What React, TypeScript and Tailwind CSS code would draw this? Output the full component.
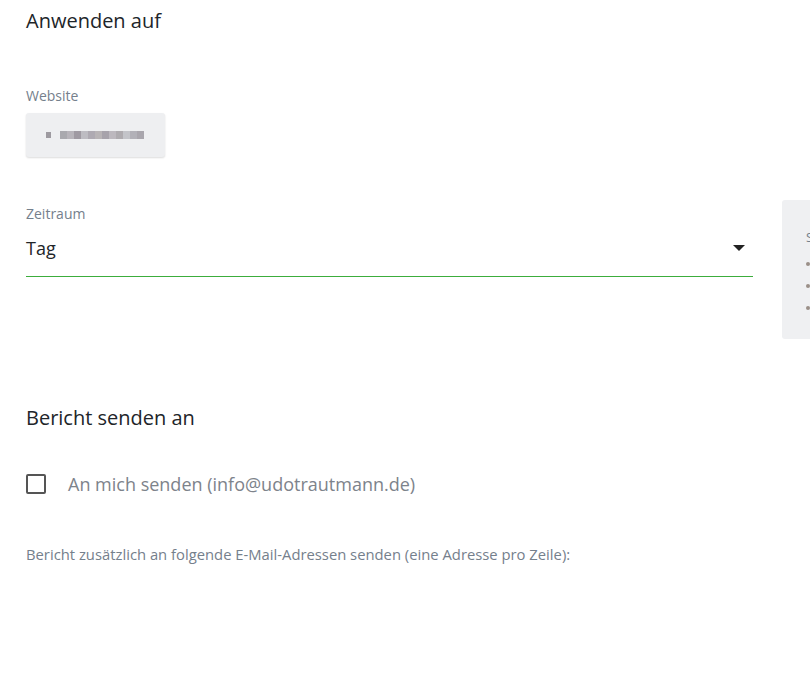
export default function App() {
  const blur = ["#a9a9ae", "#b7b4ba", "#9f9aa2", "#bdbcc2", "#aeaab2", "#b8b4b6", "#a7a3ab", "#bcb8be", "#aeabaf", "#c3c4c9", "#b2b1b8", "#a9a6ad"];
  return (
    <div className="relative h-[679px] w-[810px] overflow-hidden bg-white" style={{ fontFamily: '"Open Sans", "Noto Sans", sans-serif' }}>
      <div className="flex">
        <div className="ml-[26px] flex w-[727px] shrink-0 flex-col">
          <h2 className="mt-[7px] text-[20px] leading-[28px] text-[#212529]">Anwenden auf</h2>

          <div className="mt-[51px] text-[14px] leading-[20px] text-[#75808c]">Website</div>
          <div className="mt-[7px] flex h-[44px] w-[139px] items-center rounded-[3px] bg-[#eeeff1] pl-[20px] shadow-[0_1px_2px_rgba(0,0,0,0.14)]">
            <div className="flex h-[8px] items-center blur-[0.6px]">
              <span className="mr-[9px] h-[6px] w-[5px] bg-[#9d9aa0]" />
              {blur.map((c, i) => (
                <span key={i} className="h-[8px] w-[7px]" style={{ backgroundColor: c }} />
              ))}
            </div>
          </div>

          <div className="mt-[47px] text-[14px] leading-[20px] text-[#75808c]">Zeitraum</div>
          <div className="mt-[8px] flex h-[45px] items-start justify-between border-b border-[#3cad3c] pt-[3px]">
            <span className="text-[18px] leading-[26px] text-[#212529]">Tag</span>
            <svg width="12" height="7" viewBox="0 0 12 7" className="mr-[8px] mt-[10px]">
              <path d="M0 0h12L6 6z" fill="#222" />
            </svg>
          </div>

          <h2 className="mt-[127px] text-[20px] leading-[28px] text-[#212529]">Bericht senden an</h2>

          <div className="mt-[39px] flex items-center">
            <span className="h-[20px] w-[20px] rounded-[2px] border-2 border-[#555]" />
            <span className="ml-[22px] text-[18px] leading-[26px] text-[#7d838b]">An mich senden (info@udotrautmann.de)</span>
          </div>

          <p className="mt-[47px] text-[14.8px] leading-[20px] text-[#75808c]">
            Bericht zusätzlich an folgende E-Mail-Adressen senden (eine Adresse pro Zeile):
          </p>
        </div>

        <div className="ml-[29px] mt-[200px] flex h-[139px] w-[40px] shrink-0 flex-col gap-[18px] rounded-[3px] bg-[#eff0f2] pl-[24px] pt-[30px] text-[13px] text-[#75808c]">
          <span className="leading-[14px]">S</span>
          <span className="h-[4px] w-[4px] rounded-full bg-[#9a8f88]" />
          <span className="h-[4px] w-[4px] rounded-full bg-[#9a8f88]" />
          <span className="h-[4px] w-[4px] rounded-full bg-[#9a8f88]" />
        </div>
      </div>
    </div>
  );
}
